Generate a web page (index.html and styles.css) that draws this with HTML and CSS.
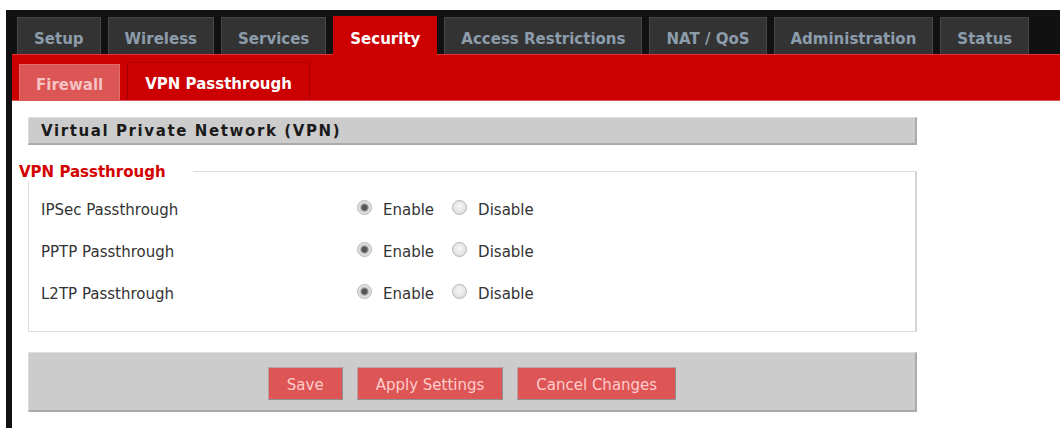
FILE: index.html
```html
<!DOCTYPE html>
<html lang="en">
<head>
<meta charset="utf-8">
<title>Security - VPN Passthrough</title>
<link rel="stylesheet" href="styles.css">
</head>
<body>
<div class="frame">
  <nav class="main-tabs">
    <a class="tab" href="#">Setup</a>
    <a class="tab" href="#">Wireless</a>
    <a class="tab" href="#">Services</a>
    <a class="tab tab-current" href="#">Security</a>
    <a class="tab" href="#">Access Restrictions</a>
    <a class="tab" href="#">NAT / QoS</a>
    <a class="tab" href="#">Administration</a>
    <a class="tab" href="#">Status</a>
  </nav>
  <nav class="sub-tabs">
    <a class="subtab subtab-muted" href="#">Firewall</a>
    <a class="subtab subtab-current" href="#">VPN Passthrough</a>
  </nav>
  <main class="content">
    <h2 class="section-title">Virtual Private Network (VPN)</h2>
    <fieldset class="group">
      <legend>VPN Passthrough</legend>
      <div class="row">
        <span class="row-label">IPSec Passthrough</span>
        <label class="choice"><input type="radio" name="ipsec" checked>Enable</label>
        <label class="choice"><input type="radio" name="ipsec">Disable</label>
      </div>
      <div class="row">
        <span class="row-label">PPTP Passthrough</span>
        <label class="choice"><input type="radio" name="pptp" checked>Enable</label>
        <label class="choice"><input type="radio" name="pptp">Disable</label>
      </div>
      <div class="row">
        <span class="row-label">L2TP Passthrough</span>
        <label class="choice"><input type="radio" name="l2tp" checked>Enable</label>
        <label class="choice"><input type="radio" name="l2tp">Disable</label>
      </div>
    </fieldset>
    <div class="actions">
      <button class="btn" type="button">Save</button>
      <button class="btn" type="button">Apply Settings</button>
      <button class="btn" type="button">Cancel Changes</button>
    </div>
  </main>
</div>
</body>
</html>
```
FILE: styles.css
```css
* { box-sizing: border-box; }

html, body {
  margin: 0;
  padding: 0;
  background: #fff;
}

body {
  font-family: "DejaVu Sans", Verdana, sans-serif;
  font-size: 15px;
  color: #333;
}

/* page frame with the dark left rail */
.frame {
  margin: 10px 0 0 6px;
  border-left: 6px solid #111;
  min-height: calc(100vh - 10px);
}

/* top level navigation */
.main-tabs {
  display: flex;
  align-items: flex-end;
  gap: 7px;
  height: 44px;
  padding: 7px 0 0 5px;
  background: #111;
}

.tab {
  height: 37px;
  padding: 3px 16px 0;
  border: 1px solid #474747;
  border-bottom: none;
  background: #333;
  color: #8c9cab;
  font-weight: bold;
  font-size: 15px;
  line-height: 36px;
  text-decoration: none;
  white-space: nowrap;
}

.tab-current {
  position: relative;
  z-index: 1;
  height: 39px;
  margin-bottom: -1px;
  background: #cc0000;
  border-color: #cc0000;
  color: #fff;
  line-height: 38px;
}

/* second level navigation */
.sub-tabs {
  display: flex;
  align-items: flex-end;
  gap: 7px;
  height: 47px;
  padding-left: 7px;
  background: #cc0000;
  border-top: 1px solid #e23434;
  border-bottom: 1px solid #e05a5a;
}

.subtab {
  padding: 3px 16px 0;
  font-weight: bold;
  font-size: 15px;
  text-decoration: none;
  white-space: nowrap;
}

.subtab-muted {
  height: 36px;
  line-height: 35px;
  background: #dd5656;
  border: 1px solid #e46c6c;
  border-bottom: none;
  color: #f6c3c3;
}

.subtab-current {
  height: 38px;
  line-height: 36px;
  padding: 3px 17px 0;
  background: #cc0000;
  border: 1px solid #a80000;
  border-bottom: none;
  color: #fff;
}

/* page body */
.content {
  padding: 16px 0 20px 16px;
}

.section-title {
  width: 889px;
  height: 28px;
  margin: 0;
  padding: 2px 0 0 12px;
  background: #ccc;
  border-top: 1px solid #ddd;
  border-left: 1px solid #ddd;
  border-right: 2px solid #aaa;
  border-bottom: 2px solid #aaa;
  color: #1a1a1a;
  font-size: 15px;
  font-weight: bold;
  letter-spacing: 1.6px;
  line-height: 23px;
}

.group {
  width: 889px;
  min-inline-size: auto;
  margin: 17px 0 0;
  padding: 8px 0 16px 0;
  border: 1px solid #ddd;
  border-right: 2px solid #d4d4d4;
}

.group legend {
  margin-left: -10px;
  padding: 1px 27px 0 0;
  background: #fff;
  color: #d40000;
  font-weight: bold;
  font-size: 15px;
  line-height: 18px;
}

.row {
  display: flex;
  align-items: center;
  height: 42px;
  padding-left: 12px;
}

.row-label {
  width: 316px;
}

.choice {
  display: flex;
  align-items: center;
}

.choice + .choice {
  margin-left: 18px;
}

/* soft grey radio buttons */
.choice input {
  appearance: none;
  -webkit-appearance: none;
  width: 15px;
  height: 15px;
  margin: 0 11px 6px 0;
  border-radius: 50%;
  border: 1px solid #b4b4b4;
  background: radial-gradient(circle at 50% 40%, #f6f6f6, #d8d8d8);
}

.choice input:checked {
  background: radial-gradient(circle, #555 0 2.5px, #888 3.2px, #d4d4d4 4.5px, #ececec 7px);
}

/* button bar */
.actions {
  display: flex;
  justify-content: center;
  align-items: flex-start;
  gap: 14px;
  width: 889px;
  height: 60px;
  margin-top: 20px;
  padding-top: 14px;
  background: #ccc;
  border-top: 1px solid #ddd;
  border-left: 1px solid #ddd;
  border-right: 2px solid #aaa;
  border-bottom: 2px solid #aaa;
}

.btn {
  height: 33px;
  padding: 2px 18px 0;
  font-family: "DejaVu Sans", Verdana, sans-serif;
  font-size: 15px;
  color: #fcc;
  background: #dd5555;
  border: 1px solid #b9a3a3;
  border-right-color: #8e8e8e;
  border-bottom-color: #8e8e8e;
}
```
